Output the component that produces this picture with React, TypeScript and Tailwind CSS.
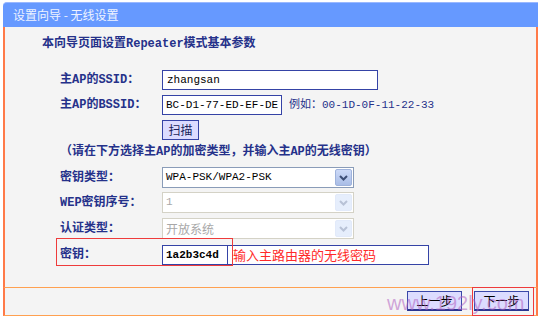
import React from 'react';

const mono = "font-['Liberation_Mono','Noto_Sans_CJK_SC',monospace]";
const cjk = "font-['Noto_Sans_CJK_SC','Liberation_Sans',sans-serif]";

const Label: React.FC<{ children: React.ReactNode }> = ({ children }) => (
  <div className={`w-[102px] shrink-0 text-[12px] font-bold leading-[16px] text-[#25318a] ${mono}`}>{children}</div>
);

const Chevron: React.FC<{ color: string }> = ({ color }) => (
  <svg width="9" height="6" viewBox="0 0 9 6">
    <path d="M1 1 L4.5 4.5 L8 1" fill="none" stroke={color} strokeWidth="2" />
  </svg>
);

interface SelectProps {
  value: string;
  disabled?: boolean;
  cjkValue?: boolean;
}

const FakeSelect: React.FC<SelectProps> = ({ value, disabled, cjkValue }) => (
  <div
    className={`flex h-[21px] w-[192px] items-center border bg-white ${
      disabled ? 'border-[#d4d2c6]' : 'border-[#8a9cb8]'
    }`}
  >
    <span
      className={`pl-[3px] text-[11px] leading-none ${cjkValue ? cjk + ' text-[12px]' : mono} ${
        disabled ? 'text-[#a8a8a8]' : 'text-black'
      }`}
    >
      {value}
    </span>
    <div
      className={`ml-auto mr-[1px] flex h-[17px] w-[17px] items-center justify-center rounded-[2px] border ${
        disabled
          ? 'border-[#e2eafa] bg-[#e6eefc]'
          : 'border-[#9fb3dc] bg-gradient-to-b from-[#cddaf8] to-[#a9bde6]'
      }`}
    >
      <Chevron color={disabled ? '#b8c2d6' : '#3d4e76'} />
    </div>
  </div>
);

const NavButton: React.FC<{ children: React.ReactNode; className?: string }> = ({ children, className = '' }) => (
  <div
    className={`flex items-center justify-center border border-b-2 border-[#3a48a8] border-b-[#2a3590] bg-[#dcdcff] text-[12px] leading-none text-black ${cjk} ${className}`}
  >
    {children}
  </div>
);

export default function App() {
  return (
    <div className="relative h-[319px] w-[540px] overflow-hidden bg-white">
      <div className="ml-[3px] mt-[2px] w-[535px]">
        {/* title bar */}
        <div
          className={`flex h-[25px] items-center rounded-tl-[4px] border-t border-[#9ab8ff] bg-[#6699ff] pl-[10px] text-[12px] text-[#eef3ff] ${cjk}`}
        >
          设置向导 - 无线设置
        </div>

        {/* form body */}
        <div className="flex h-[261px] flex-col border-x-2 border-b border-x-[#ff7a48] border-b-[#ffa050] bg-[#f4f4f4]">
          <div className={`ml-[37px] mt-[9px] h-[16px] text-[12px] font-bold leading-[16px] text-[#25318a] ${mono}`}>
            本向导页面设置Repeater模式基本参数
          </div>

          <div className="ml-[55px] mt-[18px] flex h-[20px] items-center">
            <Label>主AP的SSID：</Label>
            <div className={`flex h-[20px] w-[216px] items-center border border-[#3543a6] bg-white pl-[4px] text-[11px] text-black ${mono}`}>
              zhangsan
            </div>
          </div>

          <div className="ml-[55px] mt-[5px] flex h-[20px] items-center">
            <Label>主AP的BSSID：</Label>
            <div className={`flex h-[20px] w-[120px] items-center border border-[#3543a6] bg-white pl-[3px] text-[11px] text-black ${mono}`}>
              BC-D1-77-ED-EF-DE
            </div>
            <span className={`ml-[7px] text-[11px] text-[#25318a] ${mono}`}>例如：00-1D-0F-11-22-33</span>
          </div>

          <div className="ml-[157px] mt-[5px] flex h-[20px]">
            <div className={`flex w-[37px] items-center justify-center border border-[#3543a6] bg-[#dcdcff] text-[12px] text-[#1a1f5a] ${cjk}`}>
              扫描
            </div>
          </div>

          <div className={`ml-[55px] mt-[4px] h-[16px] text-[12px] font-bold leading-[16px] text-[#25318a] ${mono}`}>
            （请在下方选择主AP的加密类型，并输入主AP的无线密钥）
          </div>

          <div className="ml-[55px] mt-[7px] flex items-center">
            <Label>密钥类型：</Label>
            <FakeSelect value="WPA-PSK/WPA2-PSK" />
          </div>

          <div className="ml-[55px] mt-[4px] flex items-center">
            <Label>WEP密钥序号：</Label>
            <FakeSelect value="1" disabled />
          </div>

          <div className="ml-[55px] mt-[5px] flex items-center">
            <Label>认证类型：</Label>
            <FakeSelect value="开放系统" disabled cjkValue />
          </div>

          <div className="relative ml-[55px] mt-[6px] flex h-[20px] items-center">
            <Label>密钥：</Label>
            <div className={`flex h-[20px] w-[66px] items-center border border-[#3543a6] bg-white pl-[3px] text-[11px] font-bold text-black ${mono}`}>
              1a2b3c4d
            </div>
            <div className={`flex h-[20px] w-[201px] items-center border border-l-0 border-[#3543a6] bg-white pl-[5px] text-[13px] text-[#ff2a2a] ${cjk}`}>
              输入主路由器的无线密码
            </div>
            {/* red annotation frame */}
            <div className="pointer-events-none absolute left-[-4px] top-[-7px] h-[28px] w-[177px] border border-[#ee3b3b]" />
          </div>
        </div>

        {/* footer */}
        <div className="flex h-[28px] items-start justify-end gap-[12px] border-x-2 border-b border-x-[#ff7a48] border-b-[#ffa050] bg-[#f4f4f4] pr-[7px] pt-[3px]">
          <NavButton className="h-[20px] w-[55px]">上一步</NavButton>
          <NavButton className="h-[20px] w-[55px]">下一步</NavButton>
        </div>
      </div>

      {/* red frame around next button */}
      <div className="pointer-events-none absolute left-[472px] top-[287px] h-[29px] w-[62px] border border-[#ee3b3b]" />

      {/* watermark */}
      <div className="pointer-events-none absolute left-[387px] top-[293px] font-['Liberation_Sans',Arial,sans-serif] text-[20px] leading-none text-[#b060c0]/55">
        www.192ly.com
      </div>
    </div>
  );
}
